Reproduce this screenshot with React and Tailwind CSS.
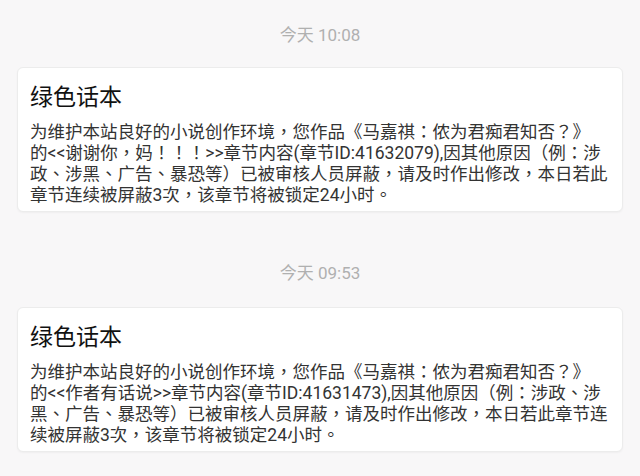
const notices = [
  {
    time: "今天 10:08",
    title: "绿色话本",
    lines: [
      "为维护本站良好的小说创作环境，您作品《马嘉祺：侬为君痴君知否？》",
      "的<<谢谢你，妈！！！>>章节内容(章节ID:41632079),因其他原因（例：涉",
      "政、涉黑、广告、暴恐等）已被审核人员屏蔽，请及时作出修改，本日若此",
      "章节连续被屏蔽3次，该章节将被锁定24小时。",
    ],
  },
  {
    time: "今天 09:53",
    title: "绿色话本",
    lines: [
      "为维护本站良好的小说创作环境，您作品《马嘉祺：侬为君痴君知否？》",
      "的<<作者有话说>>章节内容(章节ID:41631473),因其他原因（例：涉政、涉",
      "黑、广告、暴恐等）已被审核人员屏蔽，请及时作出修改，本日若此章节连",
      "续被屏蔽3次，该章节将被锁定24小时。",
    ],
  },
];

function NoticeCard({ notice }) {
  return (
    <div className="mx-[17px] rounded-[6px] border border-[#ececec] bg-white px-[12px] pt-[15px] pb-[5px] shadow-[0_1px_2px_rgba(0,0,0,0.04)]">
      <div className="text-[23px] leading-[30px] text-[#111]">{notice.title}</div>
      <div className="mt-[9px] text-[17.5px] leading-[21px] text-[#333]">
        {notice.lines.map((line, i) => (
          <div key={i} className="whitespace-nowrap">
            {line}
          </div>
        ))}
      </div>
    </div>
  );
}

export default function App() {
  return (
    <div
      className="min-h-[476px] w-[640px] overflow-hidden bg-[#f8f7f8]"
      style={{ fontFamily: 'Roboto, "Noto Sans CJK TC", sans-serif' }}
    >
      {notices.map((notice, i) => (
        <div key={i} className={i === 0 ? "pt-[21px]" : "pt-[47px]"}>
          <div className="text-center text-[17px] leading-[28px] text-[#b0b0b0]">
            {notice.time}
          </div>
          <div className={i === 0 ? "mt-[18px]" : "mt-[20px]"}>
            <NoticeCard notice={notice} />
          </div>
        </div>
      ))}
    </div>
  );
}
